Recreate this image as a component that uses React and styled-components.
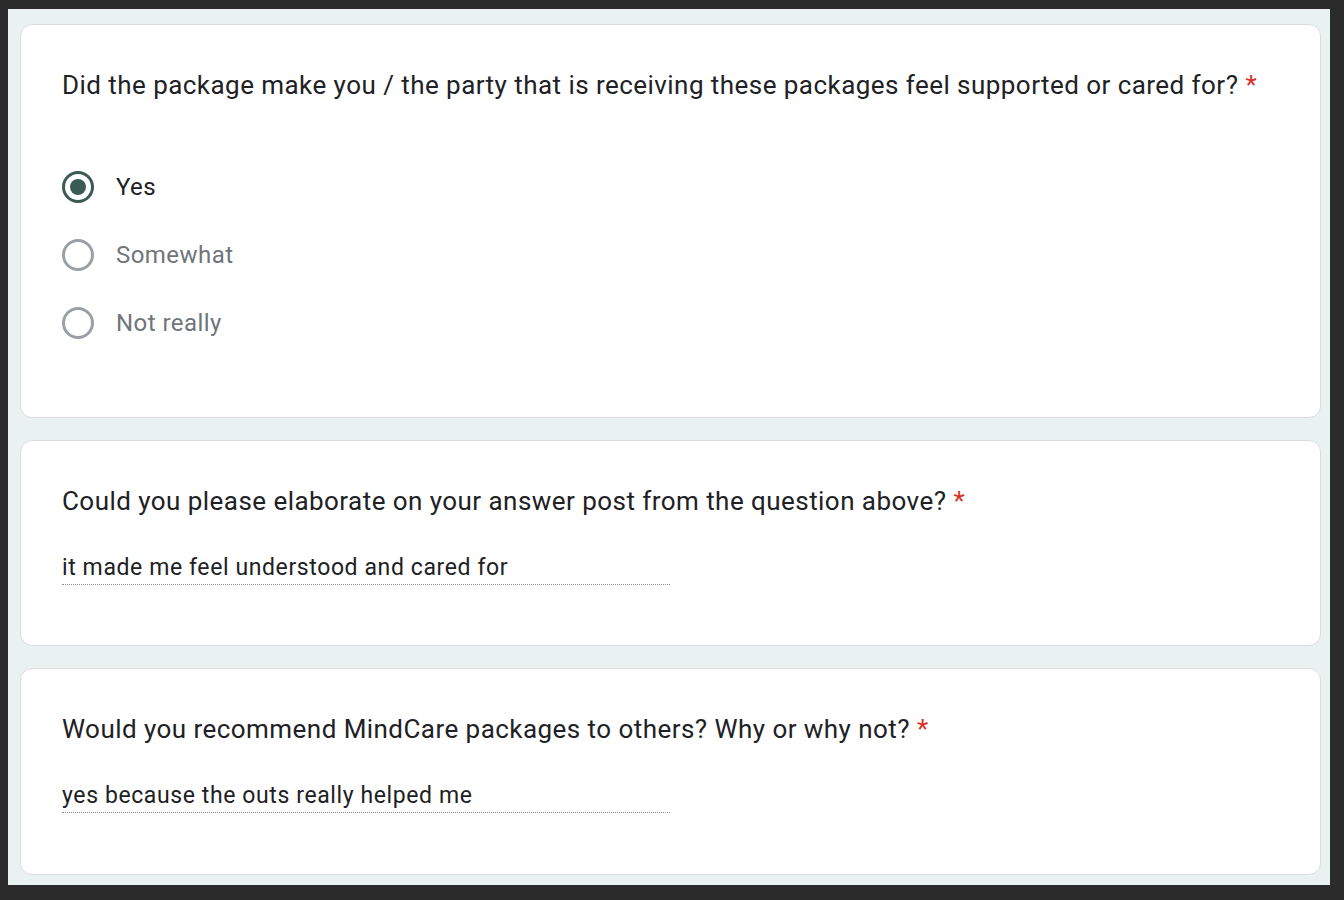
import styled, { createGlobalStyle } from "styled-components";

const GlobalStyle = createGlobalStyle`
  html, body {
    margin: 0;
    padding: 0;
    background: #2b2b2b;
  }
  * {
    box-sizing: border-box;
  }
`;

const Frame = styled.div`
  width: 1344px;
  height: 900px;
  background: #2b2b2b;
  padding: 9px 14px 15px 8px;
`;

const Canvas = styled.div`
  height: 100%;
  background: #e9f2f1;
  padding: 15px 9px 10px 12px;
  display: flex;
  flex-direction: column;
  gap: 22px;
  font-family: Roboto, "Liberation Sans", sans-serif;
`;

const Card = styled.div`
  background: #fff;
  border: 1px solid #dadce0;
  border-radius: 12px;
  height: ${(p) => p.$height}px;
  padding: 42px 41px 0 41px;
`;

const Question = styled.div`
  font-size: 26px;
  line-height: 36px;
  color: #202124;
  letter-spacing: 0.45px;
  white-space: nowrap;
`;

const Star = styled.span`
  color: #d93025;
  margin-left: 7px;
`;

const Options = styled.div`
  margin-top: 50px;
  display: flex;
  flex-direction: column;
`;

const Option = styled.div`
  height: 68px;
  display: flex;
  align-items: center;
  gap: 22px;
`;

const Radio = styled.span`
  width: 32px;
  height: 32px;
  border-radius: 50%;
  border: 3px solid ${(p) => (p.$checked ? "#3b5a54" : "#9aa0a6")};
  display: flex;
  align-items: center;
  justify-content: center;
  flex-shrink: 0;
  &::after {
    content: "";
    display: ${(p) => (p.$checked ? "block" : "none")};
    width: 16px;
    height: 16px;
    border-radius: 50%;
    background: #3b5a54;
  }
`;

const OptionLabel = styled.span`
  font-size: 24px;
  letter-spacing: 0.45px;
  color: ${(p) => (p.$checked ? "#202124" : "#70757a")};
`;

const Answer = styled.div`
  margin-top: 34px;
  width: 608px;
  font-size: 23px;
  line-height: 30px;
  letter-spacing: 0.6px;
  color: #202124;
  padding-bottom: 1px;
  border-bottom: 1px dotted #8a8d91;
`;

const options = ["Yes", "Somewhat", "Not really"];

export default function App() {
  return (
    <>
      <GlobalStyle />
      <Frame>
        <Canvas>
          <Card $height={394}>
            <Question>
              Did the package make you / the party that is receiving these
              packages feel supported or cared for?<Star>*</Star>
            </Question>
            <Options>
              {options.map((o, i) => (
                <Option key={o}>
                  <Radio $checked={i === 0} />
                  <OptionLabel $checked={i === 0}>{o}</OptionLabel>
                </Option>
              ))}
            </Options>
          </Card>
          <Card $height={206}>
            <Question>
              Could you please elaborate on your answer post from the question
              above?<Star>*</Star>
            </Question>
            <Answer>it made me feel understood and cared for</Answer>
          </Card>
          <Card $height={207}>
            <Question>
              Would you recommend MindCare packages to others? Why or why not?
              <Star>*</Star>
            </Question>
            <Answer>yes because the outs really helped me</Answer>
          </Card>
        </Canvas>
      </Frame>
    </>
  );
}
